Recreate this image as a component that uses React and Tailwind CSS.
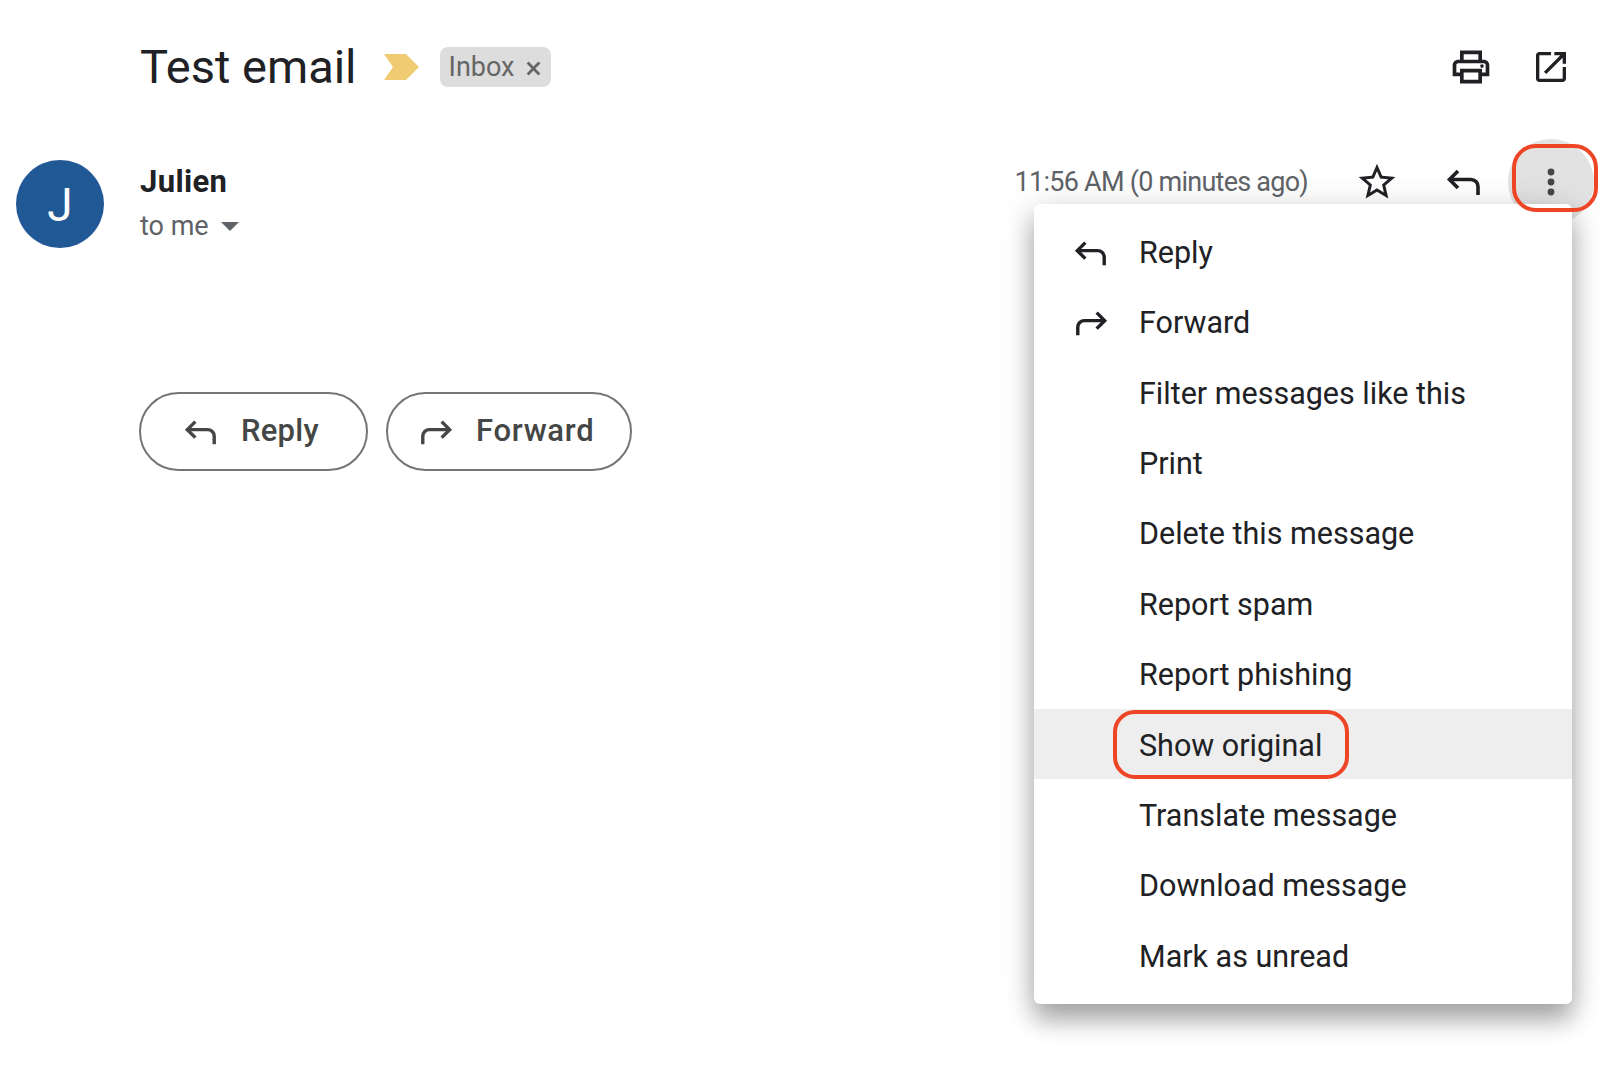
const ReplyIcon = ({ className }) => (
  <svg viewBox="0 0 36 36" className={className} fill="none" stroke="currentColor" strokeWidth="3.6" strokeLinejoin="miter">
    <path d="M12 7 3.5 15.5 12 24" />
    <path d="M3.5 15.5H25a7 7 0 0 1 7 7V31" />
  </svg>
);

const ForwardIcon = ({ className }) => (
  <svg viewBox="0 0 36 36" className={className} fill="none" stroke="currentColor" strokeWidth="3.6" strokeLinejoin="miter">
    <path d="M24 7l8.500 8.500L24 24" />
    <path d="M32.500 15.500H11a7 7 0 0 0-7 7V31" />
  </svg>
);

const items = [
  "Reply",
  "Forward",
  "Filter messages like this",
  "Print",
  "Delete this message",
  "Report spam",
  "Report phishing",
  "Show original",
  "Translate message",
  "Download message",
  "Mark as unread",
];

export default function App() {
  return (
    <div className="relative w-[1616px] h-[1082px] overflow-hidden bg-white font-['Roboto',sans-serif] text-[#202124]">
      <header className="flex items-center h-[134px] pl-[140px] pr-[45px]">
        <h1 className="text-[47px] leading-none font-normal -mt-[2px]">Test email</h1>
        <svg viewBox="0 0 35 26" className="w-[35px] h-[26px] ml-[27px] text-[#f0cb74]" fill="currentColor">
          <path d="M0 0H22L35 13 22 26H0L9 13Z" />
        </svg>
        <span className="flex items-center h-[40px] ml-[21px] pl-[9px] pr-[10px] gap-[11px] rounded-lg bg-[#dddddd] text-[27px] text-[#666666]">
          Inbox
          <svg viewBox="0 0 14 14" className="w-[15px] h-[15px] mt-[3px]" stroke="currentColor" strokeWidth="2.6">
            <path d="M1.500 1.500l11 11M12.500 1.500l-11 11" />
          </svg>
        </span>
        <div className="flex items-center gap-[38px] ml-auto">
          <svg viewBox="0 0 24 24" className="w-[44px] h-[44px] text-[#202124]" fill="currentColor">
            <path d="M19 8h-1V3H6v5H5c-1.66 0-3 1.34-3 3v6h4v4h12v-4h4v-6c0-1.66-1.34-3-3-3zM8 5h8v3H8V5zm8 12v2H8v-4h8v2zm2-2v-2H6v2H4v-4c0-.55.45-1 1-1h14c.55 0 1 .45 1 1v4h-2z" />
            <circle cx="18" cy="11.5" r="1" />
          </svg>
          <svg viewBox="0 0 24 24" className="w-[40px] h-[40px] text-[#202124]" fill="currentColor">
            <path d="M19 19H5V5h7V3H5c-1.11 0-2 .9-2 2v14c0 1.1.89 2 2 2h14c1.1 0 2-.9 2-2v-7h-2v7zM14 3v2h3.59l-9.83 9.83 1.41 1.41L19 6.41V10h2V3h-7z" />
          </svg>
        </div>
      </header>

      <section className="flex items-start h-[258px] pl-[16px] pr-[22px] pt-[26px]">
        <div className="flex items-center justify-center w-[88px] h-[88px] pt-[2px] rounded-full bg-[#215896] text-[46px] text-white">J</div>
        <div className="ml-[36px]">
          <div className="text-[31px] leading-[42px] font-bold tracking-[0.35px] mt-[1px]">Julien</div>
          <div className="flex items-center mt-[4px] text-[27px] leading-[38px] text-[#5f6368]">
            to me
            <span className="ml-[12px] mt-[1px] w-0 h-0 border-x-[9px] border-x-transparent border-t-[9px] border-t-[#5f6368]" />
          </div>
        </div>
        <div className="flex items-center ml-auto h-[44px]">
          <span className="text-[27px] tracking-[-0.75px] text-[#5f6368] mr-[47px]">11:56 AM (0 minutes ago)</span>
          <svg viewBox="0 0 24 24" className="w-[44px] h-[44px] text-[#202124] mr-[47px]" fill="currentColor">
            <path d="M22 9.24l-7.19-.62L12 2 9.19 8.63 2 9.24l5.46 4.73L5.82 21 12 17.27 18.18 21l-1.63-7.03L22 9.24zM12 15.4l-3.76 2.27 1-4.28-3.32-2.88 4.38-.38L12 6.1l1.71 4.04 4.38.38-3.32 2.88 1 4.28L12 15.4z" />
          </svg>
          <ReplyIcon className="w-[36px] h-[36px] text-[#202124] mr-[26px]" />
          <div className="flex items-center justify-center w-[86px] h-[86px] rounded-full bg-[#e2e2e2]">
            <svg viewBox="0 0 8 28" className="w-[8px] h-[28px] text-[#444746]" fill="currentColor">
              <circle cx="4" cy="4" r="3.4" />
              <circle cx="4" cy="14" r="3.4" />
              <circle cx="4" cy="24" r="3.4" />
            </svg>
          </div>
        </div>
      </section>

      <div className="flex gap-[18px] pl-[139px]">
        <button className="flex items-center h-[79px] w-[229px] pl-[43px] rounded-full border-2 border-[#757575] text-[31px] tracking-[0.25px] font-medium text-[#444746]">
          <ReplyIcon className="w-[34px] h-[34px] mr-[23px]" />
          Reply
        </button>
        <button className="flex items-center h-[79px] w-[246px] pl-[31px] rounded-full border-2 border-[#757575] text-[31px] tracking-[0.7px] font-medium text-[#444746]">
          <ForwardIcon className="w-[34px] h-[34px] mr-[23px]" />
          Forward
        </button>
      </div>

      <div className="absolute left-[1034px] top-[204px] w-[538px] h-[800px] pt-[12px] rounded-md bg-white shadow-[0_16px_24px_0_rgba(0,0,0,0.3),0_4px_36px_0_rgba(0,0,0,0.14)]">
        {items.map((label, i) => (
          <div
            key={label}
            className={`flex items-center h-[70.4px] pl-[105px] pt-[3px] text-[30.5px] ${label === "Show original" ? "bg-[#eeeeee]" : ""}`}
          >
            {label}
            {i === 0 && <ReplyIcon className="absolute left-[40px] w-[34px] h-[34px]" />}
            {i === 1 && <ForwardIcon className="absolute left-[40px] w-[34px] h-[34px]" />}
          </div>
        ))}
      </div>

      <div className="absolute left-[1512px] top-[144px] w-[86px] h-[68px] rounded-[24px] border-4 border-[#ee4527]" />
      <div className="absolute left-[1113px] top-[710px] w-[236px] h-[69px] rounded-[22px] border-4 border-[#ee4527]" />
    </div>
  );
}
